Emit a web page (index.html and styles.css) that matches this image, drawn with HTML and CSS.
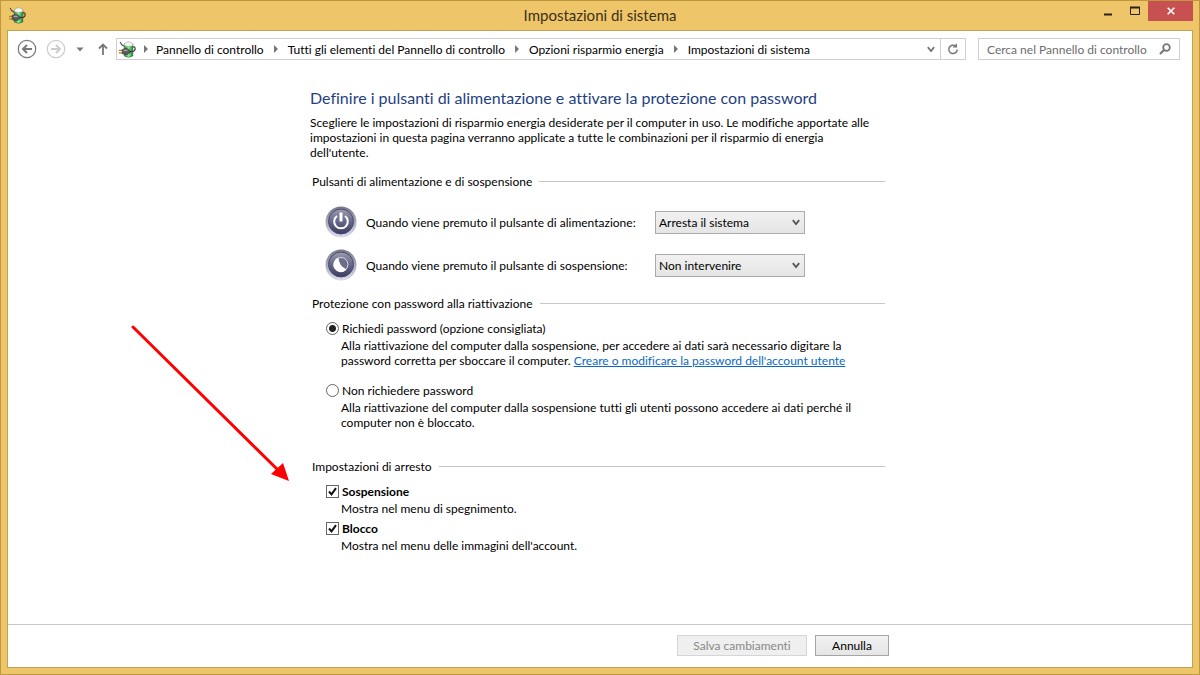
FILE: index.html
```html
<!DOCTYPE html>
<html lang="it">
<head>
    <meta charset="UTF-8">
    <title>Impostazioni di sistema</title>
    <link rel="stylesheet" href="styles.css">
</head>
<body>
    <svg class="defs" width="0" height="0" aria-hidden="true">
        <defs>
            <linearGradient id="cell" x1="0" x2="1">
                <stop offset="0" stop-color="#1f8a34"/>
                <stop offset=".5" stop-color="#8af094"/>
                <stop offset="1" stop-color="#1d8032"/>
            </linearGradient>
            <linearGradient id="ring" x1="0" y1="0" x2="0" y2="1">
                <stop offset="0" stop-color="#77778a"/>
                <stop offset="1" stop-color="#dcdeef"/>
            </linearGradient>
            <linearGradient id="knob" x1="0" y1="0" x2="0" y2="1">
                <stop offset="0" stop-color="#9a9cae"/>
                <stop offset=".5" stop-color="#66688a"/>
                <stop offset="1" stop-color="#3b3c62"/>
            </linearGradient>
            <symbol id="power-plan" viewBox="0 0 16 16">
                <path d="M5 3 Q9 1 13 3 V14 Q9 16.8 5 14 Z" fill="url(#cell)" stroke="#28532f" stroke-width=".5"/>
                <path d="M5 2.5 Q9 -1 13 2.5 V4.5 Q9 6 5 4.5 Z" fill="#f4f6f4" stroke="#8a998c" stroke-width=".5"/>
                <path d="M1 .8 Q2 4 4.8 5" fill="none" stroke="#444" stroke-width="1"/>
                <path d="M10 10 Q15.3 10.5 15.2 7 Q15 5 13 5.6" fill="none" stroke="#333" stroke-width="1.1"/>
                <path d="M0 8.8H3.5M0 11.2H3.5" stroke="#b87d14" stroke-width="1"/>
                <path d="M3 8 L5 7.2 H8 L10.5 9 V10.8 L8 12.6 H5 L3 11.8 Z" fill="#5c5c63" stroke="#2a2a2a" stroke-width=".5"/>
                <path d="M4.5 8.8H8" stroke="#b5b5b5" stroke-width="1"/>
            </symbol>
        </defs>
    </svg>

    <div class="window">
        <header class="titlebar">
            <svg class="app-icon" width="17" height="17"><use href="#power-plan"/></svg>
            <h1>Impostazioni di sistema</h1>
            <div class="window-buttons">
                <button type="button" class="win-btn" aria-label="Riduci a icona">
                    <svg width="10" height="10"><path d="M1 8.5H9" stroke="#2a2112" stroke-width="2"/></svg>
                </button>
                <button type="button" class="win-btn" aria-label="Ingrandisci">
                    <svg width="10" height="10"><path d="M.5 1V8.5H9.5V1" fill="none" stroke="#2a2112"/><path d="M0 1.5H10" stroke="#2a2112" stroke-width="2"/></svg>
                </button>
                <button type="button" class="win-btn close" aria-label="Chiudi">
                    <svg width="8" height="8"><path d="M.7 .7L7.3 7.3M7.3 .7L.7 7.3" stroke="#fff" stroke-width="1.6"/></svg>
                </button>
            </div>
        </header>

        <div class="client">
            <nav class="toolbar">
                <button type="button" class="icon-btn" aria-label="Indietro">
                    <svg width="20" height="20"><circle cx="10" cy="10" r="8.7" fill="none" stroke="#777" stroke-width="1.2"/><path d="M15 10H6.5M10 6L6 10L10 14" fill="none" stroke="#777" stroke-width="2"/></svg>
                </button>
                <button type="button" class="icon-btn forward" aria-label="Avanti">
                    <svg width="20" height="20"><circle cx="10" cy="10" r="8.7" fill="none" stroke="#ccc" stroke-width="1.2"/><path d="M5 10H13.5M10 6L14 10L10 14" fill="none" stroke="#ccc" stroke-width="2"/></svg>
                </button>
                <button type="button" class="icon-btn recent" aria-label="Percorsi recenti">
                    <svg width="8" height="5"><path d="M.5 .5H7.5L4 4.5Z" fill="#777"/></svg>
                </button>
                <button type="button" class="icon-btn up" aria-label="Livello superiore">
                    <svg width="10" height="12"><path d="M5 12V2M1 5.5L5 1.5L9 5.5" fill="none" stroke="#777" stroke-width="1.8"/></svg>
                </button>
                <div class="address">
                    <svg class="address-icon" width="17" height="17"><use href="#power-plan"/></svg>
                    <ol class="crumbs">
                        <li><a href="#">Pannello di controllo</a></li>
                        <li><a href="#">Tutti gli elementi del Pannello di controllo</a></li>
                        <li><a href="#">Opzioni risparmio energia</a></li>
                        <li><a href="#">Impostazioni di sistema</a></li>
                    </ol>
                    <button type="button" class="icon-btn history" aria-label="Percorsi precedenti">
                        <svg width="8" height="7"><path d="M.8 1.2L4 5L7.2 1.2" fill="none" stroke="#777" stroke-width="1.8"/></svg>
                    </button>
                    <button type="button" class="icon-btn refresh" aria-label="Aggiorna">
                        <svg width="12" height="12"><path d="M8.5 3A4.2 4.2 0 1 0 10.2 6.5" fill="none" stroke="#777" stroke-width="1.5"/><path d="M5.5 4.6H10V.2Z" fill="#777"/></svg>
                    </button>
                </div>
                <div class="search">
                    <input type="text" placeholder="Cerca nel Pannello di controllo" aria-label="Cerca nel Pannello di controllo">
                    <svg width="12" height="12"><circle cx="7.5" cy="4.5" r="3.3" fill="none" stroke="#777" stroke-width="1.8"/><path d="M5 7L1 11" stroke="#777" stroke-width="2.2"/></svg>
                </div>
            </nav>

            <main class="page">
                <div class="column">
                    <h2>Definire i pulsanti di alimentazione e attivare la protezione con password</h2>
                    <p class="intro">Scegliere le impostazioni di risparmio energia desiderate per il computer in uso. Le modifiche apportate alle<br>
                        impostazioni in questa pagina verranno applicate a tutte le combinazioni per il risparmio di energia<br>
                        dell'utente.</p>

                    <section class="group">
                        <h3>Pulsanti di alimentazione e di sospensione</h3>
                        <div class="setting">
                            <svg width="34" height="34">
                                <circle cx="17" cy="17" r="15.5" fill="url(#ring)"/>
                                <circle cx="17" cy="16.5" r="12.5" fill="url(#knob)" stroke="#4a4a66"/>
                                <path d="M13 11A6.8 6.8 0 1 0 21 11" fill="none" stroke="#fff" stroke-width="2"/>
                                <path d="M17 7.5V16.5" stroke="#fff" stroke-width="3"/>
                            </svg>
                            <label for="power-button">Quando viene premuto il pulsante di alimentazione:</label>
                            <select id="power-button">
                                <option>Arresta il sistema</option>
                                <option>Sospensione</option>
                                <option>Non intervenire</option>
                            </select>
                        </div>
                        <div class="setting">
                            <svg width="34" height="34">
                                <circle cx="17" cy="17" r="15.5" fill="url(#ring)"/>
                                <circle cx="17" cy="16.5" r="12.5" fill="url(#knob)" stroke="#4a4a66"/>
                                <circle cx="17" cy="16.5" r="7" fill="#6c6e88" stroke="#d5d6e0"/>
                                <path d="M14.5 9.5A7.5 7.5 0 1 0 22.5 21.5Q14.5 17.5 14.5 9.5Z" fill="#fff"/>
                            </svg>
                            <label for="sleep-button">Quando viene premuto il pulsante di sospensione:</label>
                            <select id="sleep-button">
                                <option>Non intervenire</option>
                                <option>Sospensione</option>
                                <option>Arresta il sistema</option>
                            </select>
                        </div>
                    </section>

                    <section class="group wakeup">
                        <h3>Protezione con password alla riattivazione</h3>
                        <div class="choice wide">
                            <input type="radio" name="wake" id="wake-ask" checked>
                            <label for="wake-ask">Richiedi password (opzione consigliata)</label>
                            <p>Alla riattivazione del computer dalla sospensione, per accedere ai dati sarà necessario digitare la<br>
                                password corretta per sboccare il computer. <a href="#">Creare o modificare la password dell'account utente</a></p>
                        </div>
                        <div class="choice wide">
                            <input type="radio" name="wake" id="wake-free">
                            <label for="wake-free">Non richiedere password</label>
                            <p>Alla riattivazione del computer dalla sospensione tutti gli utenti possono accedere ai dati perché il<br>
                                computer non è bloccato.</p>
                        </div>
                    </section>

                    <section class="group shutdown">
                        <h3>Impostazioni di arresto</h3>
                        <div class="choice">
                            <input type="checkbox" id="menu-sleep" checked>
                            <label for="menu-sleep">Sospensione</label>
                            <p>Mostra nel menu di spegnimento.</p>
                        </div>
                        <div class="choice">
                            <input type="checkbox" id="menu-lock" checked>
                            <label for="menu-lock">Blocco</label>
                            <p>Mostra nel menu delle immagini dell'account.</p>
                        </div>
                    </section>

                    <svg class="pointer" width="160" height="160" aria-hidden="true">
                        <path d="M3 3L148 146" stroke="#f00" stroke-width="3" stroke-linecap="round"/>
                        <path d="M159 157L141 150L153 139Z" fill="#f00"/>
                    </svg>
                </div>
            </main>

            <footer class="actions">
                <div class="column">
                    <button type="button" class="save" disabled>Salva cambiamenti</button>
                    <button type="button" class="cancel">Annulla</button>
                </div>
            </footer>
        </div>
    </div>
</body>
</html>
```
FILE: styles.css
```css
* {
    box-sizing: border-box;
}
body {
    margin: 0;
    font-family: Lato, 'Open Sans', sans-serif;
    font-size: 12px;
    font-variant-ligatures: none;
    line-height: 15px;
    color: #000;
}
h1, h2, h3, p, ol {
    margin: 0;
    padding: 0;
    font-weight: normal;
}
button, input, select {
    font: inherit;
    margin: 0;
}
svg {
    display: block;
    flex: none;
}
.defs {
    position: absolute;
}

/* Window frame */
.window {
    display: flex;
    flex-direction: column;
    min-height: 100vh;
    padding: 0 6px 6px;
    background-color: #EEC669;
    border: 1px solid #BE983F;
}
.titlebar {
    display: grid;
    grid-template-columns: 1fr auto 1fr;
    height: 29px;
}
.app-icon {
    margin: 6px 0 0 2px;
}
h1 {
    font-size: 15px;
    line-height: 29px;
    color: #3B301A;
}
.window-buttons {
    display: flex;
    justify-content: flex-end;
    align-items: flex-start;
}
.win-btn {
    display: flex;
    align-items: center;
    justify-content: center;
    width: 27px;
    height: 20px;
    padding: 0;
    border: none;
    background: none;
}
.win-btn.close {
    width: 45px;
    background-color: #C75050;
}
.client {
    flex: 1;
    display: flex;
    flex-direction: column;
    background-color: #FFF;
    border: 1px solid #BFA25A;
}

/* Navigation */
.toolbar {
    display: flex;
    align-items: center;
    padding: 7px 12px 0 9px;
}
.icon-btn {
    display: flex;
    align-items: center;
    justify-content: center;
    padding: 0;
    border: none;
    background: none;
}
.forward {
    margin-left: 9px;
}
.recent {
    margin-left: 10px;
}
.up {
    margin: 0 8px 0 14px;
}
.address {
    flex: 1;
    display: flex;
    align-items: center;
    height: 22px;
    border: 1px solid #D0D0D0;
}
.address-icon {
    margin-left: 2px;
}
.crumbs {
    flex: 1;
    display: flex;
    list-style: none;
    white-space: nowrap;
}
.crumbs li {
    display: flex;
    align-items: center;
}
.crumbs li::before {
    content: "";
    margin: 0 8px;
    border: 4px solid transparent;
    border-left-color: #777;
    border-right-width: 0;
}
.crumbs li + li::before {
    margin: 0 10px;
}
.crumbs a {
    color: inherit;
    text-decoration: none;
}
.history {
    margin-right: 5px;
}
.refresh {
    width: 25px;
    height: 20px;
    border-left: 1px solid #D0D0D0;
}
.search {
    display: flex;
    align-items: center;
    width: 202px;
    height: 22px;
    margin-left: 12px;
    padding: 0 8px;
    border: 1px solid #D0D0D0;
}
.search input {
    flex: 1;
    min-width: 0;
    padding: 0;
    border: none;
    outline: none;
}
.search input::placeholder {
    color: #6D6D6D;
}

/* Content */
.page {
    flex: 1;
}
.column {
    position: relative;
    width: 100%;
    max-width: 580px;
    margin: 0 auto;
    white-space: nowrap;
}
h2 {
    padding-top: 28px;
    font-size: 16px;
    line-height: 20px;
    color: #1F3F80;
}
.intro {
    margin-top: 7px;
}
.group {
    margin: 14px 5px 0 2px;
}
h3 {
    display: flex;
    align-items: center;
    gap: 7px;
    font-size: 12px;
}
h3::after {
    content: "";
    flex: 1;
    height: 1px;
    background-color: #C8C8C8;
}
.setting {
    display: flex;
    align-items: center;
    height: 43px;
    padding-left: 12px;
}
h3 + .setting {
    margin-top: 12px;
}
.setting svg {
    margin-bottom: 2px;
}
.setting label {
    width: 279px;
    margin: 0 10px 0 8px;
}
select {
    appearance: none;
    width: 150px;
    height: 23px;
    padding: 0 3px;
    color: #000;
    border: 1px solid #ABABAB;
    border-radius: 0;
    background: url("data:image/svg+xml,%3Csvg xmlns='http://www.w3.org/2000/svg' width='8' height='7'%3E%3Cpath d='M.8 1.2L4 5L7.2 1.2' fill='none' stroke='%23555' stroke-width='1.8'/%3E%3C/svg%3E") no-repeat right 4px center, linear-gradient(#F1F1F1, #E5E5E5);
}
.choice {
    display: grid;
    grid-template-columns: 13px 1fr;
    column-gap: 3px;
    align-items: center;
    margin-left: 14px;
}
h3 + .choice {
    margin-top: 10px;
}
.choice + .choice {
    margin-top: 5px;
}
.wide + .wide {
    margin-top: 15px;
}
.choice p {
    grid-column: 1 / -1;
    margin: 2px 0 0 15px;
}
.choice input {
    appearance: none;
    width: 13px;
    height: 13px;
    border: 1px solid #666;
    background: #FFF;
}
.choice input[type="radio"] {
    border-radius: 50%;
}
.choice input[type="radio"]:checked {
    background: radial-gradient(#222 3px, #FFF 4px);
}
.choice input[type="checkbox"]:checked {
    background: url("data:image/svg+xml,%3Csvg xmlns='http://www.w3.org/2000/svg' width='11' height='11'%3E%3Cpath d='M2 5.5L4.5 8.3L9 2.2' fill='none' stroke='%23111' stroke-width='2'/%3E%3C/svg%3E") center no-repeat;
}
.choice a {
    color: #0A6BBE;
}
.wakeup {
    margin-top: 9px;
}
.shutdown {
    margin-top: 29px;
}
.shutdown label {
    font-weight: bold;
}
.pointer {
    position: absolute;
    top: 264px;
    right: 100%;
    margin-right: 20px;
}

/* Footer */
.actions {
    padding: 10px 0 11px;
    border-top: 1px solid #C8C8C8;
}
.actions .column {
    display: flex;
    justify-content: flex-end;
    gap: 8px;
    padding-right: 1px;
}
.actions button {
    height: 21px;
    padding: 0;
    border: 1px solid #A5A5A5;
    background: linear-gradient(#F2F2F2, #E5E5E5);
    color: #000;
}
.actions .save {
    width: 130px;
    border-color: #D5D5D5;
    background: #EFEFEF;
    color: #888;
}
.actions .cancel {
    width: 74px;
}
```
